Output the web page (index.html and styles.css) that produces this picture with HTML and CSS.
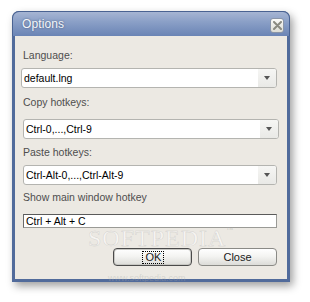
FILE: index.html
```html
<!DOCTYPE html>
<html>
<head>
<meta charset="utf-8">
<link rel="stylesheet" href="styles.css">
</head>
<body>
<div class="window">
  <div class="titlebar">
    <span class="title">Options</span>
    <span class="close-x">
      <svg width="9" height="9" viewBox="0 0 9 9"><path d="M1 1 L8 8 M8 1 L1 8" stroke="#8a8a80" stroke-width="2" stroke-linecap="round"/></svg>
    </span>
  </div>
  <div class="content">
    <div class="label l1">Language:</div>
    <div class="combo c1"><span class="val">default.lng</span><span class="drop"><i class="tri"></i></span></div>
    <div class="label l2">Copy hotkeys:</div>
    <div class="combo c2"><span class="val">Ctrl-0,...,Ctrl-9</span><span class="drop"><i class="tri"></i></span></div>
    <div class="label l3">Paste hotkeys:</div>
    <div class="combo c3"><span class="val">Ctrl-Alt-0,...,Ctrl-Alt-9</span><span class="drop"><i class="tri"></i></span></div>
    <div class="label l4">Show main window hotkey</div>
    <div class="field">Ctrl + Alt + C</div>
    <div class="buttons">
      <div class="btn default"><span class="focus">OK</span></div>
      <div class="btn">Close</div>
    </div>
  </div>
  <div class="wm">SOFTPEDIA<sup>™</sup></div>
  <div class="wm-url">www.softpedia.com</div>
</div>
</body>
</html>
```
FILE: styles.css
```css
html, body {
  margin: 0;
  padding: 0;
  background: #ffffff;
}
body {
  font-family: "Liberation Sans", Arial, sans-serif;
  font-size: 10.5px;
  width: 310px;
  height: 302px;
  overflow: hidden;
}
.window {
  position: relative;
  margin: 11px 0 0 12px;
  width: 278px;
  height: 271px;
  box-sizing: border-box;
  border-radius: 7px 7px 0 0;
  background: #516b9b;
  box-shadow: 3px 4px 9px rgba(0,0,0,0.38);
  display: flex;
  flex-direction: column;
}
.titlebar {
  height: 25px;
  box-sizing: border-box;
  border-radius: 7px 7px 0 0;
  border: 1px solid #4a6392;
  border-bottom: none;
  background: linear-gradient(#a6b5d3 0%, #8ba0c7 40%, #6a84b5 100%);
  display: flex;
  align-items: center;
  justify-content: space-between;
  padding: 0 5px 0 9px;
}
.title {
  color: #f4f7fb;
  font-size: 12px;
  text-shadow: 0 0 2px rgba(40,55,90,0.7);
  letter-spacing: 0.1px;
}
.close-x {
  width: 14px;
  height: 15px;
  box-sizing: border-box;
  border: 1px solid #8a95a8;
  border-radius: 3px;
  background: linear-gradient(#fbfbf8, #dcdcd4);
  display: flex;
  align-items: center;
  justify-content: center;
  margin-top: 2px;
}
.content {
  flex: 1;
  margin: 0 3px 3px 3px;
  background: #ece9e3;
  padding: 0 10px 0 6px;
  display: flex;
  flex-direction: column;
}
.label {
  color: #4e4e4e;
  line-height: 13px;
  height: 13px;
  padding-left: 2px;
}
.l1 { margin-top: 13px; }
.l2 { margin-top: 8px; }
.l3 { margin-top: 7px; }
.l4 { margin-top: 6px; }
.combo {
  height: 20px;
  box-sizing: border-box;
  border: 1px solid #b4b4b0;
  border-radius: 3px;
  background: #ffffff;
  display: flex;
  align-items: center;
  color: #000;
}
.c1 { margin-top: 6px; width: 256px; }
.c2 { margin-top: 10px; width: 256px; margin-left: 2px; }
.c3 { margin-top: 6px; width: 254px; margin-left: 2px; }
.val {
  flex: 1;
  padding-left: 2px;
}
.drop {
  width: 18px;
  height: 18px;
  background: linear-gradient(#f6f6f4, #e9e9e6);
  border-radius: 0 2px 2px 0;
  display: flex;
  align-items: center;
  justify-content: center;
}
.tri {
  width: 0;
  height: 0;
  border-left: 3.5px solid transparent;
  border-right: 3.5px solid transparent;
  border-top: 4px solid #555555;
}
.field {
  margin-top: 10px;
  margin-left: 2px;
  width: 254px;
  height: 14px;
  box-sizing: border-box;
  border: 1px solid #9a9a96;
  border-top-color: #5a5a5a;
  border-left-color: #6a6a6a;
  background: #ffffff;
  color: #000;
  line-height: 12px;
  padding-left: 2px;
}
.buttons {
  margin-top: 20px;
  display: flex;
  justify-content: flex-end;
  gap: 6px;
  padding-right: 0;
}
.btn {
  width: 79px;
  height: 18px;
  box-sizing: border-box;
  border: 1px solid #8a8a86;
  border-radius: 4px;
  background: linear-gradient(#ffffff 0%, #f4f4f2 45%, #dcdcd8 100%);
  display: flex;
  align-items: center;
  justify-content: center;
  color: #1a1a1a;
  font-size: 11px;
}
.btn.default {
  border-color: #4a4a4a;
  box-shadow: inset 0 0 0 1px #c8c8c4;
}
.focus {
  border: 1px dotted #000;
  padding: 0 3px;
  width: 14px;
  text-align: center;
  line-height: 11px;
  height: 11px;
}
.wm {
  position: absolute;
  left: 76px;
  top: 214px;
  font-family: "Liberation Serif", serif;
  font-size: 24px;
  letter-spacing: 1px;
  color: rgba(255,255,255,0.55);
  -webkit-text-stroke: 0.5px rgba(150,150,150,0.35);
  pointer-events: none;
}
.wm sup {
  font-size: 7px;
  vertical-align: 14px;
  -webkit-text-stroke: 0;
  color: rgba(170,170,170,0.5);
}
.wm-url {
  position: absolute;
  left: 96px;
  top: 262px;
  font-size: 9px;
  color: rgba(170,170,170,0.35);
  pointer-events: none;
}
```
